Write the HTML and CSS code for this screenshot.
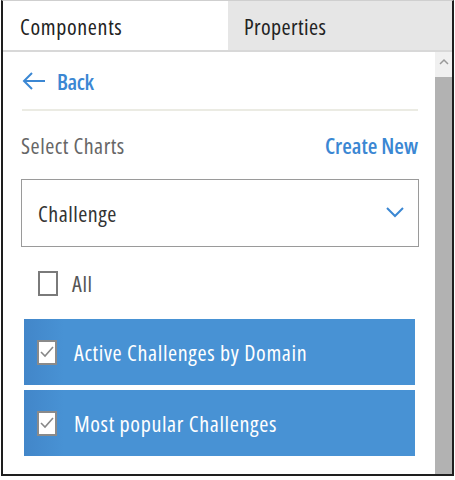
FILE: index.html
```html
<!DOCTYPE html>
<html>
<head>
<meta charset="utf-8">
<link rel="stylesheet" href="styles.css">
</head>
<body>
<div class="frame">
  <div class="tabs">
    <div class="tab tab-active">Components</div>
    <div class="tab tab-inactive">Properties</div>
  </div>
  <div class="main">
    <div class="content">
      <div class="back">
        <svg class="back-icon" width="24" height="20" viewBox="0 0 24 20"><path d="M23 10H2M10 2L2 10L10 18" fill="none" stroke="#3b87d3" stroke-width="2"/></svg>
        <span>Back</span>
      </div>
      <div class="sep"></div>
      <div class="head">
        <span class="head-label">Select Charts</span>
        <span class="head-link">Create New</span>
      </div>
      <div class="select">
        <span>Challenge</span>
        <svg class="chev" width="18" height="12" viewBox="0 0 18 12"><path d="M1 2L9 10L17 2" fill="none" stroke="#3b87d3" stroke-width="2"/></svg>
      </div>
      <div class="all">
        <span class="cb cb-empty"></span>
        <span>All</span>
      </div>
      <div class="rows">
        <div class="row">
          <span class="cb cb-checked"><svg width="14" height="12" viewBox="0 0 14 12"><path d="M1 6L5 10L13 1" fill="none" stroke="#888" stroke-width="1.6"/></svg></span>
          <span>Active Challenges by Domain</span>
        </div>
        <div class="row">
          <span class="cb cb-checked"><svg width="14" height="12" viewBox="0 0 14 12"><path d="M1 6L5 10L13 1" fill="none" stroke="#888" stroke-width="1.6"/></svg></span>
          <span>Most popular Challenges</span>
        </div>
      </div>
    </div>
    <div class="scrollbar">
      <div class="scroll-up"><svg width="10" height="7" viewBox="0 0 10 7"><path d="M1 6L5 2L9 6" fill="none" stroke="#999" stroke-width="1.5"/></svg></div>
      <div class="thumb"></div>
    </div>
  </div>
</div>
</body>
</html>
```

FILE: styles.css
```css
html, body {
  margin: 0;
  padding: 0;
  background: #fff;
}
body {
  font-family: "Open Sans", "Liberation Sans", sans-serif;
  font-stretch: 75%;
  font-size: 22px;
  letter-spacing: 0.65px;
}
.frame {
  box-sizing: border-box;
  width: 453px;
  height: 476px;
  margin-left: 1px;
  border: 2px solid #1e1e1e;
  border-top: 1px solid #cfcfcf;
  display: flex;
  flex-direction: column;
  overflow: hidden;
}
.tabs {
  display: flex;
  height: 49px;
  border-bottom: 2px solid #d8d8d8;
  flex: none;
}
.tab {
  display: flex;
  align-items: center;
  color: #222;
}
.tab-active {
  width: 225px;
  padding-left: 17px;
  box-sizing: border-box;
  background: #fff;
}
.tab-inactive {
  flex: 1;
  padding-left: 16px;
  background: #e6e6e6;
  letter-spacing: 0.4px;
}
.main {
  flex: 1;
  display: flex;
  min-height: 0;
}
.content {
  flex: 1;
  padding: 0 17px 0 17px;
  display: flex;
  flex-direction: column;
}
.back {
  height: 57px;
  display: flex;
  align-items: center;
  gap: 11px;
  color: #3b87d3;
  font-weight: 600;
  letter-spacing: -0.4px;
  padding-left: 2px;
}
.sep {
  height: 2px;
  background: #ebebe3;
  margin-left: 2px;
}
.head {
  height: 68px;
  display: flex;
  align-items: center;
  justify-content: space-between;
  padding-left: 1px;
}
.head-label {
  color: #666;
  letter-spacing: 0.5px;
}
.head-link {
  font-weight: 600;
  color: #3b87d3;
  letter-spacing: 0;
}
.select {
  box-sizing: border-box;
  height: 68px;
  margin-left: 1px;
  margin-right: -1px;
  border: 1.5px solid #9a9a9a;
  display: flex;
  align-items: center;
  justify-content: space-between;
  padding: 0 14px 0 16px;
  color: #333;
  letter-spacing: 0.5px;
}
.chev {
  margin-top: -2px;
}
.all {
  height: 72px;
  display: flex;
  align-items: center;
  gap: 14px;
  padding-left: 18px;
  color: #555;
}
.cb {
  box-sizing: border-box;
  width: 20px;
  height: 25px;
  border: 2px solid #7a7a7a;
  display: flex;
  align-items: center;
  justify-content: center;
  flex: none;
}
.cb-checked {
  background: #fff;
  border-color: #8a8a8a;
}
.rows {
  display: flex;
  flex-direction: column;
  gap: 5px;
  margin-left: 4px;
  margin-right: 3px;
}
.row {
  height: 66px;
  display: flex;
  align-items: center;
  gap: 17px;
  padding-left: 13px;
  background: linear-gradient(to right, #4286c9 0px, #4892d4 40px, #4892d4 100%);
  color: #fff;
}
.scrollbar {
  width: 17px;
  display: flex;
  flex-direction: column;
  flex: none;
}
.scroll-up {
  height: 25px;
  background: #f0f0f0;
  display: flex;
  justify-content: center;
  padding-top: 6px;
  box-sizing: border-box;
}
.thumb {
  flex: 1;
  background: #b2b2b2;
}
```
